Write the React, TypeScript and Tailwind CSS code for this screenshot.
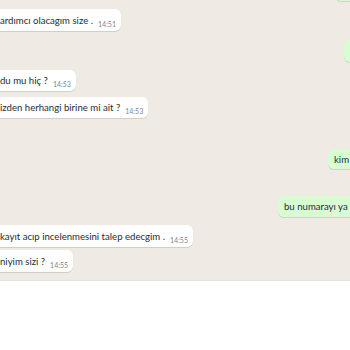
import React from 'react';

const font = { fontFamily: 'Lato, "Noto Sans", sans-serif' };

const Incoming: React.FC<{ text: string; time: string; className?: string }> = ({ text, time, className }) => (
  <div
    className={`self-start -ml-[6px] pl-[6px] pr-[5px] flex items-end gap-[5px] rounded-[6px] bg-white shadow-[0_1px_0.5px_rgba(11,20,26,0.13)] ${className ?? ''}`}
  >
    <span className="text-[9.6px] leading-[15px] text-[#222e35] whitespace-nowrap">{text}</span>
    <span className="text-[7px] leading-[10px] text-[#7a8890] whitespace-nowrap translate-y-[1px]">{time}</span>
  </div>
);

const Outgoing: React.FC<{ text?: string; className?: string }> = ({ text, className }) => (
  <div
    className={`self-end -mr-[8px] pr-[8px] flex items-center overflow-hidden rounded-[6px] bg-[#d9fdd3] shadow-[0_1px_0.5px_rgba(11,20,26,0.13)] ${className ?? ''}`}
  >
    {text && <span className="text-[9.6px] leading-[15px] text-[#222e35] whitespace-nowrap">{text}</span>}
  </div>
);

export default function App() {
  return (
    <div className="w-[350px] h-[350px] overflow-hidden bg-white" style={font}>
      <div className="h-[281px] bg-[#efebe4] border-b border-[#e6e3df] overflow-hidden flex flex-col">
        <Outgoing className="-mt-[21px] h-[22px] w-[23px]" />
        <Incoming className="mt-[8px] h-[22px] py-[3px]" text="ardımcı olacagım size ." time="14:51" />
        <Outgoing className="mt-[9px] h-[22px] w-[14px]" />
        <Incoming className="mt-[8px] h-[21px] py-[3px]" text="du mu hiç ?" time="14:53" />
        <Incoming className="mt-[6px] h-[21px] py-[3px]" text="izden herhangi birine mi ait ?" time="14:53" />
        <Outgoing className="mt-[31px] h-[20px] w-[30px] pl-[6px]" text="kim" />
        <Outgoing className="mt-[27px] h-[21px] w-[80px] pl-[6px]" text="bu numarayı ya" />
        <Incoming className="mt-[8px] h-[22px] py-[3px]" text="kayıt acıp incelenmesini talep edecgim ." time="14:55" />
        <Incoming className="mt-[3px] h-[22px] py-[3px]" text="niyim sizi ?" time="14:55" />
      </div>
    </div>
  );
}
